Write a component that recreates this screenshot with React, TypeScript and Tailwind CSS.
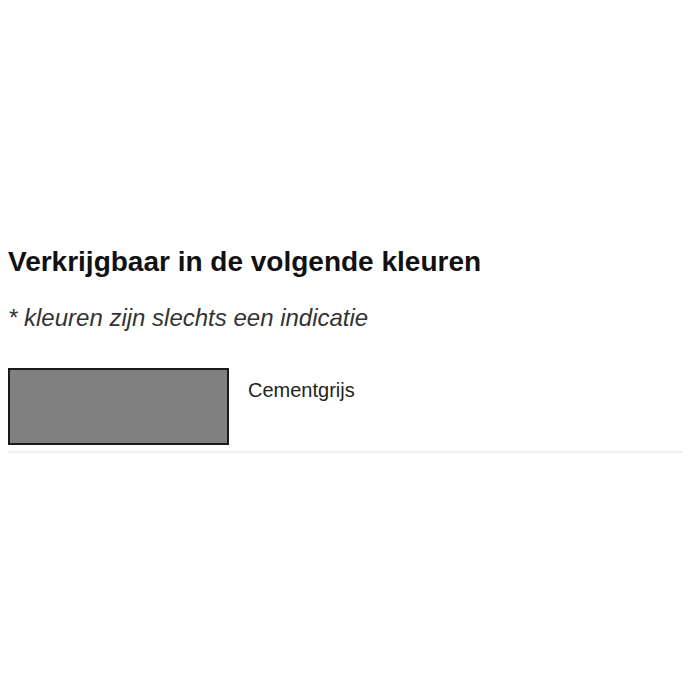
export default function App() {
  return (
    <div className="w-[700px] h-[700px] bg-white" style={{ fontFamily: '"Liberation Sans", Arial, sans-serif' }}>
      <div className="pt-[246px] pl-[8px] pr-[17px]">
        <h2 className="text-[28px] leading-[32px] font-bold text-[#111]">Verkrijgbaar in de volgende kleuren</h2>
        <p className="mt-[26px] text-[24px] leading-[28px] italic text-[#333]">* kleuren zijn slechts een indicatie</p>
        <div className="mt-[36px] flex items-start gap-[19px] pb-[6px] border-b-2 border-[#efefef]">
          <div className="w-[221px] h-[77px] bg-[#808080] border-2 border-[#1a1a1a]"></div>
          <div className="pt-[10px] text-[20px] leading-[24px] text-[#222]">Cementgrijs</div>
        </div>
      </div>
    </div>
  );
}
